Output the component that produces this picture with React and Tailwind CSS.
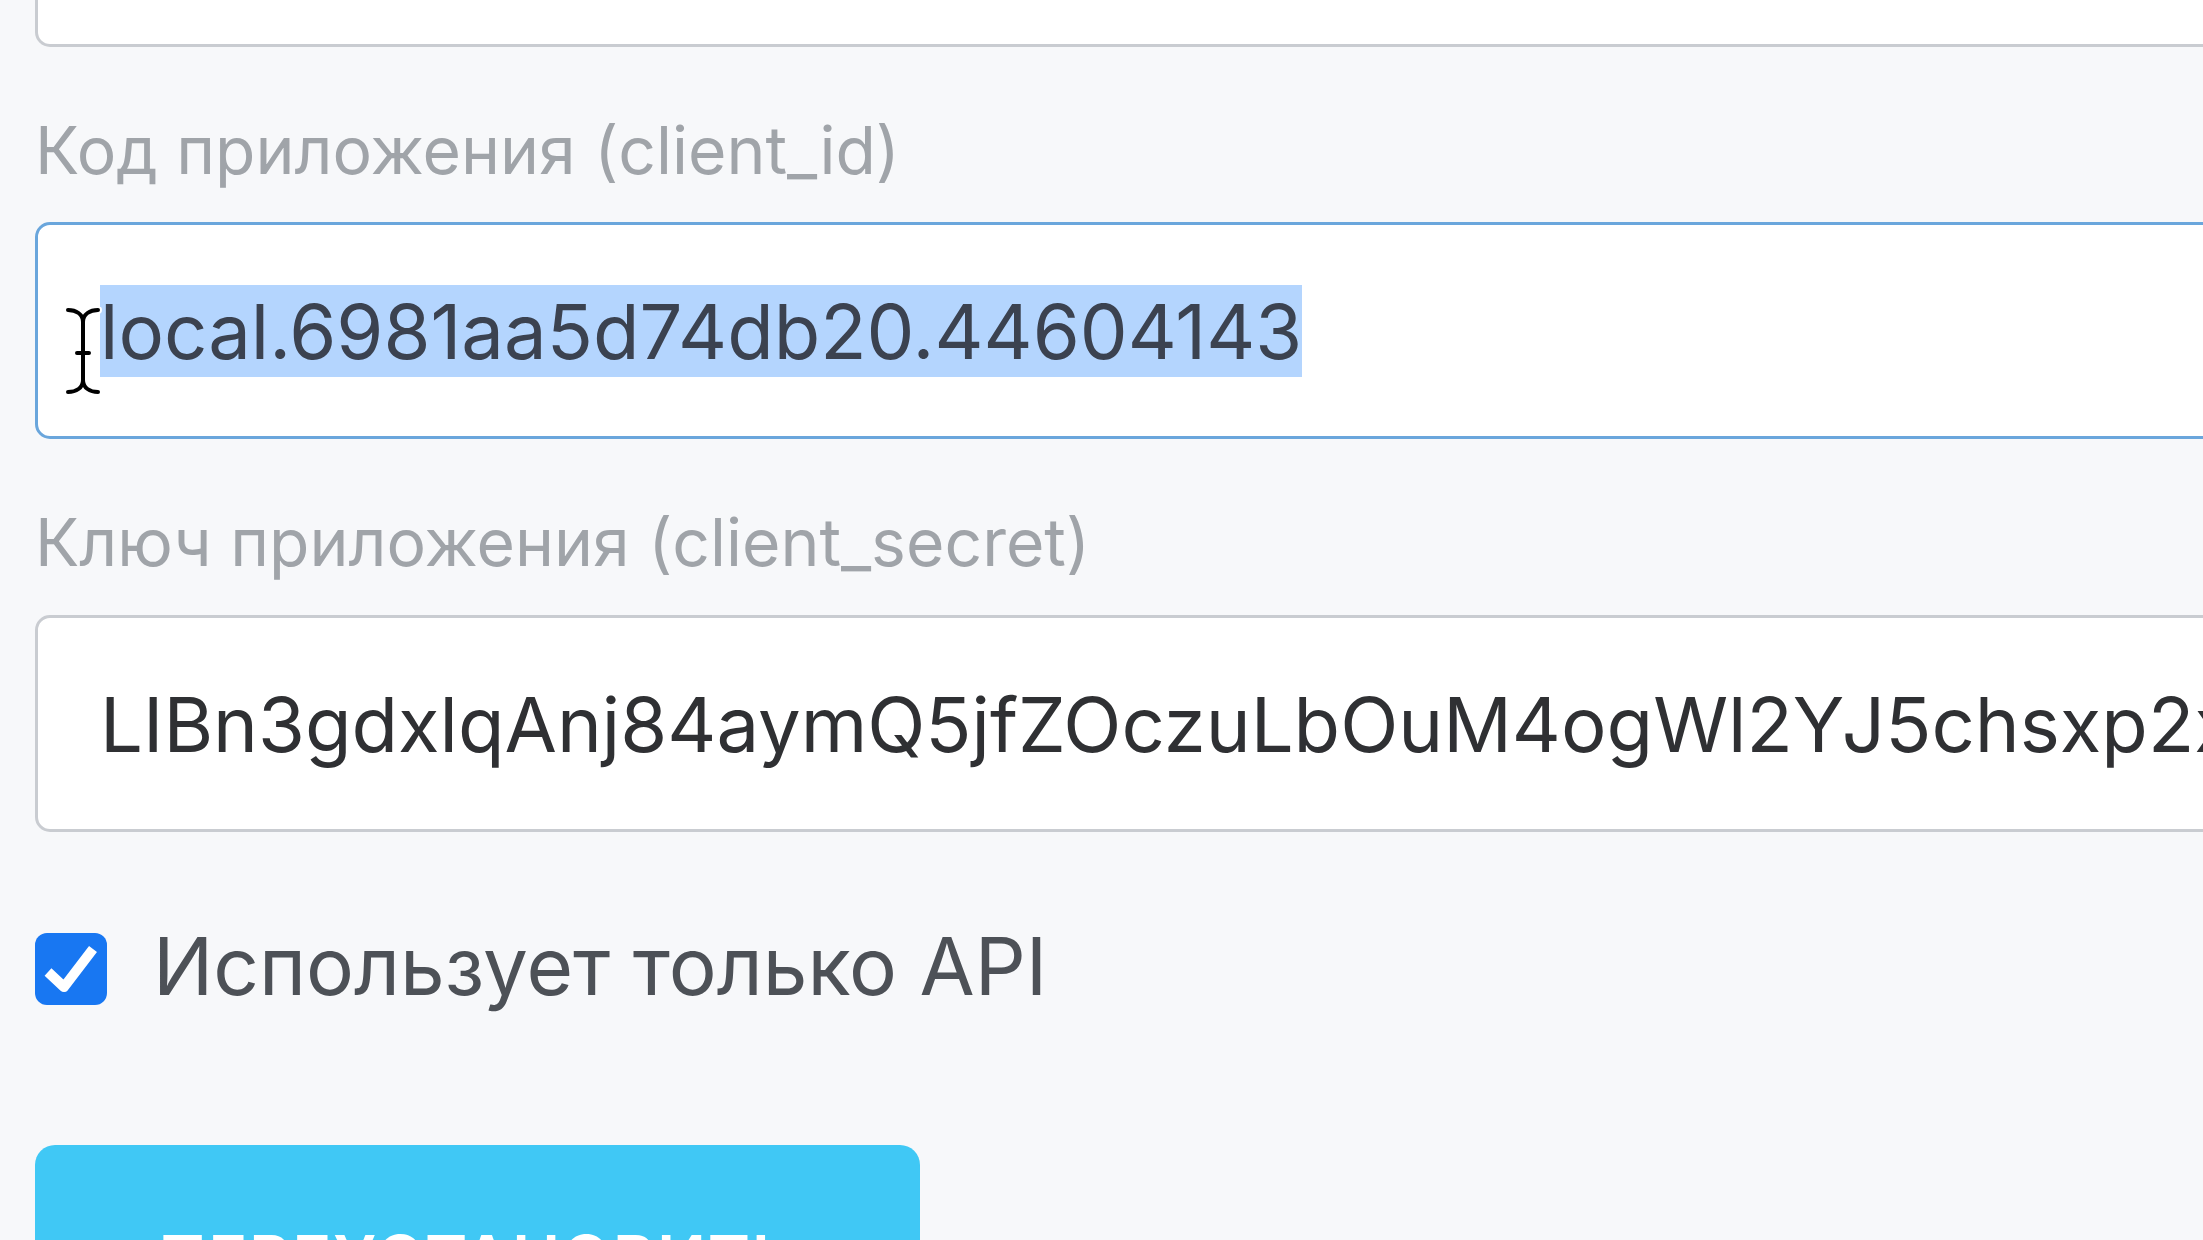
import React from 'react';

const font = { fontFamily: 'Inter, "Noto Sans", sans-serif' };

function IBeam() {
  const d =
    'M5 3 C13 3 20 7 20 15 C20 7 27 3 35 3 M20 15 V73 M5 85 C13 85 20 81 20 73 C20 81 27 85 35 85 M14 46 H26';
  return (
    <svg width="40" height="88" viewBox="0 0 40 88" className="absolute left-[25px] top-[82px]">
      <path d={d} fill="none" stroke="#fff" strokeWidth="8" strokeLinecap="round" />
      <path d={d} fill="none" stroke="#000" strokeWidth="4" strokeLinecap="round" />
    </svg>
  );
}

function CheckBox() {
  return (
    <div className="w-[72px] h-[72px] shrink-0 rounded-[12px] bg-[#1877f2] flex items-center justify-center">
      <svg width="72" height="72" viewBox="0 0 72 72">
        <path d="M13 39 L29 54 L58 16" fill="none" stroke="#fff" strokeWidth="10" strokeLinejoin="round" />
      </svg>
    </div>
  );
}

export default function App() {
  return (
    <div className="w-[2203px] h-[1240px] overflow-hidden bg-[#f7f8fa]" style={font}>
      <div className="w-[2600px] pl-[35px]">
        {/* previous field, cut off at the top */}
        <div className="h-[47px] bg-white border-[3px] border-t-0 border-[#c9ccd1] rounded-b-[15px]" />

        <div className="mt-[70px] text-[66px] leading-none text-[#a0a4a9]">
          Код приложения (client_id)
        </div>

        <div className="relative mt-[39px] h-[217px] bg-white border-[3px] border-[#6aa6dc] rounded-[15px] pl-[62px] pt-[68px]">
          <div className="text-[76px] leading-none text-[#3b4250] whitespace-nowrap">
            <span className="bg-[#b4d5fe]">local.6981aa5d74db20.44604143</span>
          </div>
          <IBeam />
        </div>

        <div className="mt-[70px] text-[66px] leading-none text-[#a0a4a9]">
          Ключ приложения (client_secret)
        </div>

        <div className="mt-[40px] h-[217px] bg-white border-[3px] border-[#c9ccd1] rounded-[15px] pl-[62px] pt-[68px]">
          <div className="text-[76px] leading-none text-[#2f3033] whitespace-nowrap">
            LIBn3gdxlqAnj84aymQ5jfZOczuLbOuM4ogWl2YJ5chsxp2xKq7
          </div>
        </div>

        <div className="mt-[100px] flex items-center gap-[46px]">
          <CheckBox />
          <span className="text-[80px] leading-none text-[#4d5157] -mt-[6px]">Использует только API</span>
        </div>

        <div className="mt-[139px] w-[885px] h-[220px] rounded-[20px] bg-[#40c8f5] flex justify-center pt-[82px]">
          <span className="text-[64px] leading-none font-semibold tracking-[2px] text-white">ПЕРЕУСТАНОВИТЬ</span>
        </div>
      </div>
    </div>
  );
}
